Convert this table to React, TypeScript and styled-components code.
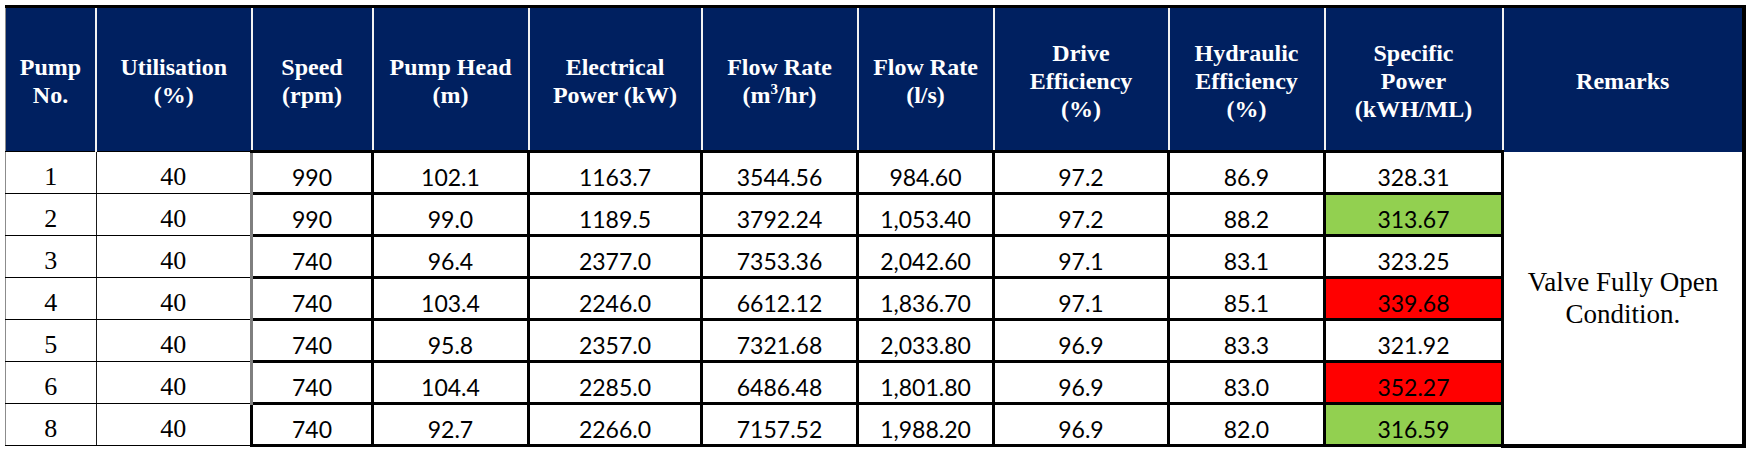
import styled, { createGlobalStyle, css } from "styled-components";

type Fill = "green" | "red" | undefined;

type Row = {
    pump: number;
    util: number;
    values: string[];
    fill?: Fill;
};

const rows: Row[] = [
    { pump: 1, util: 40, values: ["990", "102.1", "1163.7", "3544.56", "984.60", "97.2", "86.9", "328.31"] },
    { pump: 2, util: 40, values: ["990", "99.0", "1189.5", "3792.24", "1,053.40", "97.2", "88.2", "313.67"], fill: "green" },
    { pump: 3, util: 40, values: ["740", "96.4", "2377.0", "7353.36", "2,042.60", "97.1", "83.1", "323.25"] },
    { pump: 4, util: 40, values: ["740", "103.4", "2246.0", "6612.12", "1,836.70", "97.1", "85.1", "339.68"], fill: "red" },
    { pump: 5, util: 40, values: ["740", "95.8", "2357.0", "7321.68", "2,033.80", "96.9", "83.3", "321.92"] },
    { pump: 6, util: 40, values: ["740", "104.4", "2285.0", "6486.48", "1,801.80", "96.9", "83.0", "352.27"], fill: "red" },
    { pump: 8, util: 40, values: ["740", "92.7", "2266.0", "7157.52", "1,988.20", "96.9", "82.0", "316.59"], fill: "green" },
];

const widths = [90.5, 155.5, 121, 156, 173, 156, 136, 175, 156, 178, 241.5];

const fills = {
    green: "#92d050",
    red: "#ff0000",
};

const App = () => {
    return (
        <Page>
            <GlobalStyle />
            <Sheet>
                <colgroup>
                    {widths.map((w, i) => (
                        <col key={i} style={{ width: w }} />
                    ))}
                </colgroup>
                <thead>
                    <tr>
                        <HeadCell $first>Pump<br />No.</HeadCell>
                        <HeadCell $thin>Utilisation<br />(%)</HeadCell>
                        <HeadCell>Speed<br />(rpm)</HeadCell>
                        <HeadCell>Pump Head<br />(m)</HeadCell>
                        <HeadCell>Electrical<br />Power (kW)</HeadCell>
                        <HeadCell>Flow Rate<br />(m<Sup>3</Sup>/hr)</HeadCell>
                        <HeadCell>Flow Rate<br />(l/s)</HeadCell>
                        <HeadCell>Drive<br />Efficiency<br />(%)</HeadCell>
                        <HeadCell>Hydraulic<br />Efficiency<br />(%)</HeadCell>
                        <HeadCell>Specific<br />Power<br />(kWH/ML)</HeadCell>
                        <HeadCell $last>Remarks</HeadCell>
                    </tr>
                </thead>
                <tbody>
                    {rows.map((r, i) => {
                        const lastRow = i === rows.length - 1;
                        return (
                            <BodyRow key={r.pump}>
                                <SerifCell $first>{r.pump}</SerifCell>
                                <SerifCell $lastRow={lastRow}>{r.util}</SerifCell>
                                {r.values.map((v, j) => (
                                    <Cell
                                        key={j}
                                        $fill={j === r.values.length - 1 ? r.fill : undefined}
                                        $edge={j === 0}
                                        $lastRow={lastRow}
                                    >
                                        {v}
                                    </Cell>
                                ))}
                                {i === 0 && (
                                    <RemarkCell rowSpan={rows.length}>
                                        <RemarkText>Valve Fully Open Condition.</RemarkText>
                                    </RemarkCell>
                                )}
                            </BodyRow>
                        );
                    })}
                </tbody>
            </Sheet>
        </Page>
    );
};

const GlobalStyle = createGlobalStyle`
    body {
        margin: 0;
        background: #ffffff;
    }
`;

const Page = styled.div`
    padding: 5px 0 0 5px;
`;

const Sheet = styled.table`
    border-collapse: collapse;
    table-layout: fixed;
    width: 1738px;
`;

const HeadCell = styled.th<{ $first?: boolean; $thin?: boolean; $last?: boolean }>`
    height: 139px;
    padding: 3px 4px 0;
    background: #002060;
    color: #ffffff;
    font-family: "Liberation Serif", "Times New Roman", serif;
    font-weight: bold;
    font-size: 24px;
    line-height: 28px;
    text-align: center;
    vertical-align: middle;
    border-top: 3px solid #000000;
    border-left: 2px solid #f2f2f2;
    border-right: 2px solid #f2f2f2;
    border-bottom: 3px solid #000000;
    ${(p) => p.$first && css`
        border-left: 1px solid #8c8c8c;
        border-bottom: 1px solid #000000;
    `}
    ${(p) => p.$thin && css`
        border-bottom: 1px solid #000000;
    `}
    ${(p) => p.$last && css`
        border-right: 4px solid #000000;
        border-bottom: none;
    `}
`;

const Sup = styled.sup`
    font-size: 15px;
    line-height: 0;
    vertical-align: 9px;
`;

const BodyRow = styled.tr`
    height: 42px;
`;

const SerifCell = styled.td<{ $first?: boolean; $lastRow?: boolean }>`
    padding: 0 4px 1px;
    font-family: "Liberation Serif", "Times New Roman", serif;
    font-size: 26px;
    color: #000000;
    text-align: center;
    vertical-align: bottom;
    border: 1px solid #000000;
    border-right: ${(p) => (p.$first ? "1px solid #1a1a1a" : p.$lastRow ? "3px solid #000000" : "3px solid #7f7f7f")};
    ${(p) => p.$first && css`
        border-left: 1px solid #8c8c8c;
    `}
`;

const Cell = styled.td<{ $fill?: Fill; $edge?: boolean; $lastRow?: boolean }>`
    padding: 0 4px 1px;
    font-family: Lato, "Liberation Sans", sans-serif;
    font-size: 23px;
    color: #000000;
    text-align: center;
    vertical-align: bottom;
    background: ${(p) => (p.$fill ? fills[p.$fill] : "#ffffff")};
    border: 3px solid #000000;
    ${(p) => p.$edge && !p.$lastRow && css`
        border-left: 3px solid #7f7f7f;
    `}
`;

const RemarkCell = styled.td`
    padding: 0 12px;
    text-align: center;
    vertical-align: middle;
    background: #ffffff;
    border-top: none;
    border-left: 3px solid #000000;
    border-right: 4px solid #000000;
    border-bottom: 4px solid #000000;
`;

const RemarkText = styled.span`
    font-family: "Liberation Serif", "Times New Roman", serif;
    font-size: 27px;
    line-height: 32px;
    color: #000000;
`;

export default App
